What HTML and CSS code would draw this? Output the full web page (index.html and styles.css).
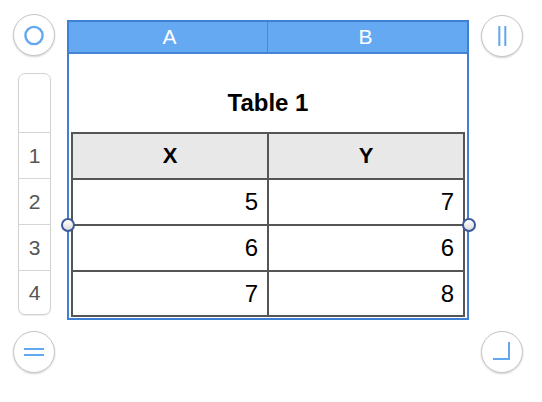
FILE: index.html
```html
<!DOCTYPE html>
<html>
<head>
<meta charset="utf-8">
<link rel="stylesheet" href="styles.css">
</head>
<body>
<div class="canvas">
  <div class="side side-left">
    <div class="ctl ctl-tl">
      <svg width="40" height="40" viewBox="0 0 40 40"><circle cx="20" cy="20.5" r="8.6" fill="none" stroke="#62a7f1" stroke-width="2.4"/></svg>
    </div>
    <div class="rowheads">
      <div class="rh rh-top"></div>
      <div class="rh">1</div>
      <div class="rh">2</div>
      <div class="rh">3</div>
      <div class="rh rh-last">4</div>
    </div>
    <div class="ctl ctl-bl">
      <svg width="40" height="40" viewBox="0 0 40 40"><rect x="10" y="16" width="20" height="2" fill="#62a7f1"/><rect x="10" y="22" width="20" height="2" fill="#62a7f1"/></svg>
    </div>
  </div>

  <div class="frame">
    <div class="colheads">
      <div class="ch">A</div>
      <div class="ch">B</div>
    </div>
    <div class="title">Table 1</div>
    <div class="grid">
      <div class="cell head">X</div>
      <div class="cell head">Y</div>
      <div class="cell">5</div>
      <div class="cell">7</div>
      <div class="cell">6</div>
      <div class="cell">6</div>
      <div class="cell">7</div>
      <div class="cell">8</div>
    </div>
    <div class="handle handle-l"></div>
    <div class="handle handle-r"></div>
  </div>

  <div class="side side-right">
    <div class="ctl ctl-tr">
      <svg width="40" height="40" viewBox="0 0 40 40"><rect x="16.3" y="10" width="2" height="20" fill="#62a7f1"/><rect x="22.3" y="10" width="2" height="20" fill="#62a7f1"/></svg>
    </div>
    <div class="ctl ctl-br">
      <svg width="40" height="40" viewBox="0 0 40 40"><path d="M27 10 V27 H11" fill="none" stroke="#62a7f1" stroke-width="2"/></svg>
    </div>
  </div>
</div>
</body>
</html>
```

FILE: styles.css
```css
html, body {
  margin: 0;
  padding: 0;
  background: #ffffff;
}

body {
  width: 542px;
  height: 402px;
  overflow: hidden;
  font-family: "Liberation Sans", Arial, Helvetica, sans-serif;
}

.canvas {
  display: grid;
  grid-template-columns: 67px 402px 73px;
  align-items: start;
}

.side {
  display: flex;
  flex-direction: column;
}

.ctl {
  width: 42px;
  height: 42px;
  box-sizing: border-box;
  border: 1px solid #c6c6c6;
  border-radius: 50%;
  background: #ffffff;
  box-shadow: 0 1px 2px rgba(0, 0, 0, 0.18);
  display: flex;
  align-items: center;
  justify-content: center;
}

.ctl svg {
  display: block;
}

.ctl-tl {
  margin: 14px 0 0 13px;
}

.ctl-bl {
  margin: 16px 0 0 13px;
}

.ctl-tr {
  margin: 15px 0 0 12px;
}

.ctl-br {
  margin: 274px 0 0 12px;
}

.rowheads {
  margin: 17px 0 0 18px;
  width: 33px;
  box-sizing: border-box;
  border: 1px solid #d2d2d2;
  border-radius: 7px;
  background: #ffffff;
  box-shadow: 0 1px 1px rgba(0, 0, 0, 0.08);
  display: flex;
  flex-direction: column;
  overflow: hidden;
}

.rh {
  height: 46px;
  box-sizing: border-box;
  border-top: 1px solid #d6d6d6;
  display: flex;
  align-items: center;
  justify-content: center;
  font-size: 21px;
  color: #555555;
}

.rh-top {
  height: 58px;
  border-top: none;
}

.rh-last {
  height: 44px;
}

.frame {
  position: relative;
  margin-top: 20px;
  width: 402px;
  height: 300px;
  box-sizing: border-box;
  border: 2px solid #3f80d2;
  display: flex;
  flex-direction: column;
}

.colheads {
  height: 32px;
  box-sizing: border-box;
  background: #64a9f1;
  border-bottom: 2px solid #4384d4;
  display: grid;
  grid-template-columns: 198px 1fr;
}

.ch {
  color: #ffffff;
  font-size: 21px;
  line-height: 30px;
  text-align: center;
}

.ch:first-child {
  padding-left: 3px;
}

.ch + .ch {
  border-left: 1px solid #4a88d6;
  padding-right: 4px;
}

.title {
  padding: 35px 0 15px;
  font-size: 24px;
  font-weight: bold;
  line-height: 28px;
  text-align: center;
  color: #000000;
}

.grid {
  margin: 0 2px;
  padding: 2px;
  background: #555555;
  display: grid;
  grid-template-columns: 194px 194px;
  grid-template-rows: 44px 44px 44px 43px;
  gap: 2px;
}

.cell {
  background: #ffffff;
  display: flex;
  align-items: center;
  justify-content: flex-end;
  padding-right: 9px;
  font-size: 24px;
  color: #000000;
}

.cell.head {
  background: #e8e8e8;
  justify-content: center;
  padding-right: 0;
  font-size: 22px;
  font-weight: bold;
}

.handle {
  position: absolute;
  top: 196px;
  width: 14px;
  height: 14px;
  box-sizing: border-box;
  border: 2px solid #3c5a9b;
  border-radius: 50%;
  background: linear-gradient(#ffffff, #dcdcdc);
}

.handle-l {
  left: -8.5px;
}

.handle-r {
  right: -8.5px;
}
```
